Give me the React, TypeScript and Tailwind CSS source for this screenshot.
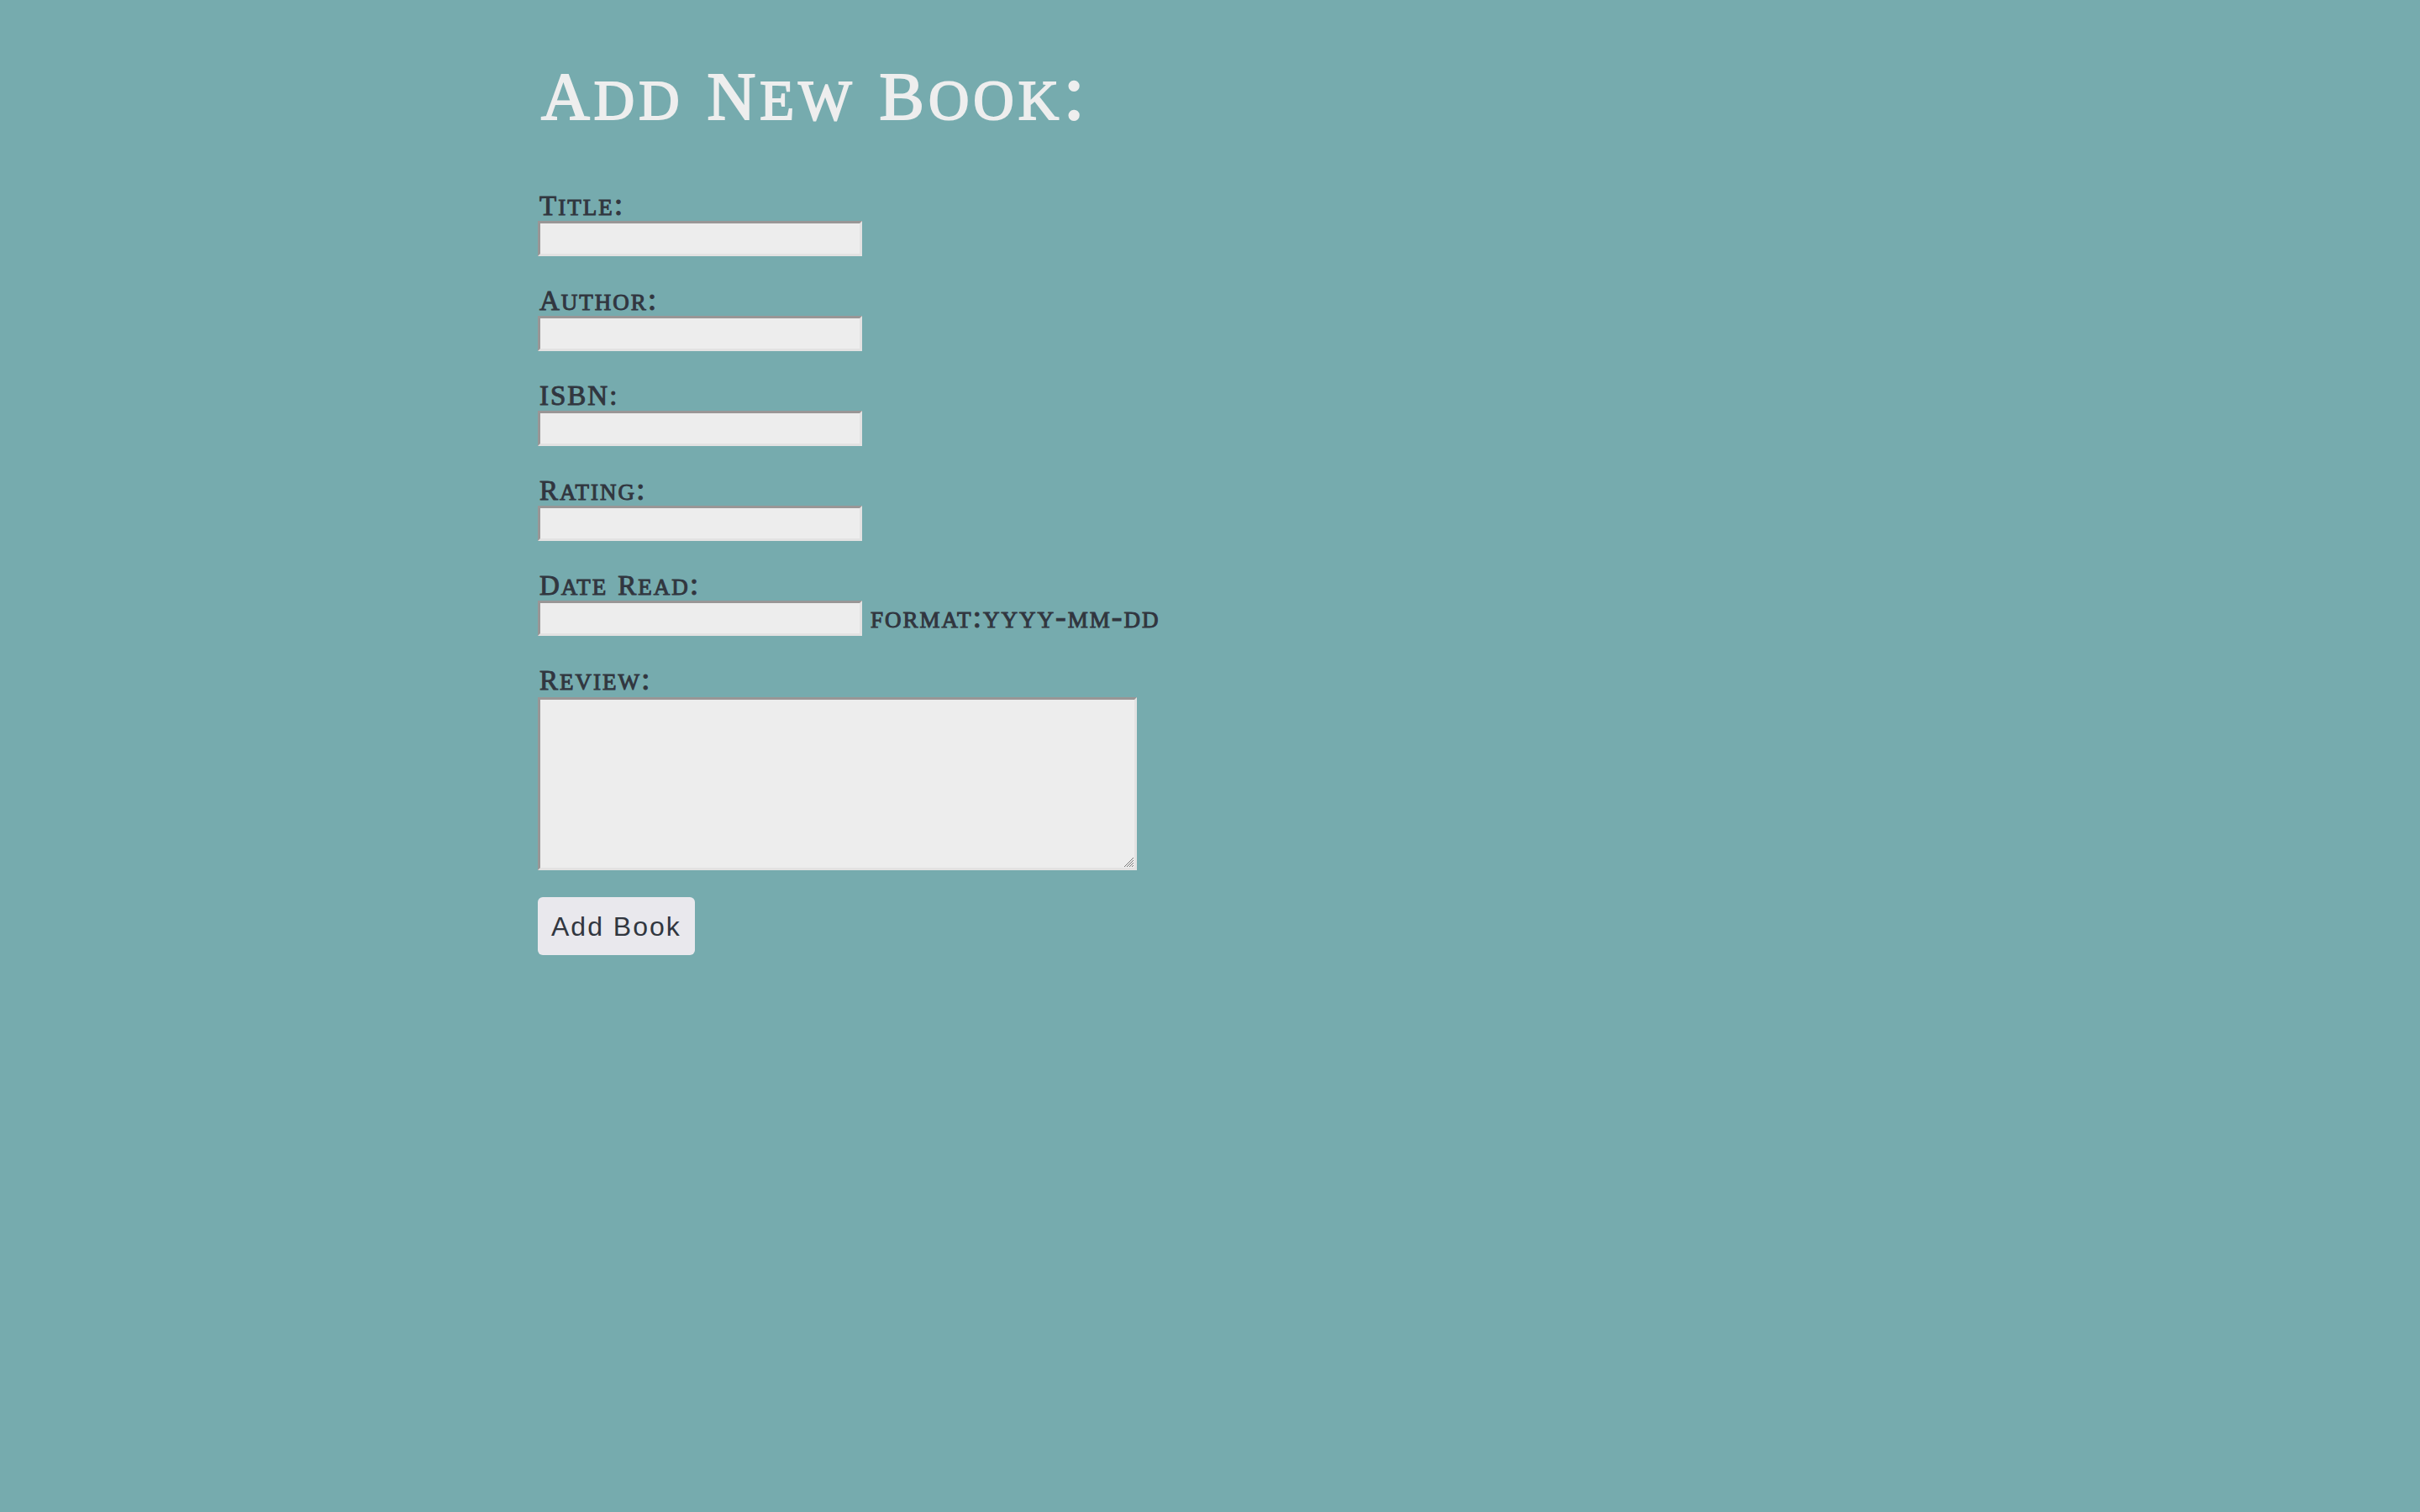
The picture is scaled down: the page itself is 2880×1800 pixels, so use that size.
import React from "react";

const box =
  "block border-3 border-t-[#999696] border-l-[#999696] border-r-[#e3e2e2] border-b-[#e3e2e2] bg-[#ededed] px-1 text-[28px] outline-none";

function Words({ text, cap }: { text: string; cap: string }) {
  return (
    <>
      {text.split(" ").map((word) => (
        <span key={word} className={`inline-block ${cap}`}>
          {word}
        </span>
      ))}
    </>
  );
}

function FieldLabel({ id, text }: { id: string; text: string }) {
  const plain = text === "ISBN:";
  return (
    <label
      htmlFor={id}
      className={`flex h-9 items-baseline gap-3 pl-0.5 tracking-[2px] [-webkit-text-stroke:1px] ${
        plain ? "text-[33px] leading-9" : "text-[38px] leading-8 [font-variant-caps:small-caps]"
      }`}
    >
      {plain ? text : <Words text={text} cap="first-letter:text-[33px]" />}
    </label>
  );
}

const fields = [
  { id: "title", label: "Title:" },
  { id: "author", label: "Author:" },
  { id: "isbn", label: "ISBN:" },
  { id: "rating", label: "Rating:" },
  { id: "date", label: "Date Read:", hint: "format:yyyy-mm-dd" },
];

export default function App() {
  return (
    <div className="min-h-screen bg-[#76abae] font-['Liberation_Serif',serif] text-[#31363f]">
      <main className="mx-auto max-w-[1600px] pt-[58px]">
        <h1 className="flex items-baseline gap-7 pl-1 text-[95px] leading-[104px] tracking-[5px] text-[#eeeeee] [-webkit-text-stroke:2px] [font-variant-caps:small-caps]">
          <Words text="Add New Book:" cap="first-letter:text-[80px]" />
        </h1>
        <form className="mt-15 flex flex-col items-start" onSubmit={(e) => e.preventDefault()}>
          {fields.map((f) => (
            <div key={f.id} className="mb-[35px]">
              <FieldLabel id={f.id} text={f.label} />
              <div className="flex h-[42px] items-center gap-2">
                <input id={f.id} type="text" className={`${box} h-[42px] w-[386px]`} />
                {f.hint && (
                  <span className="pb-1 pl-0.5 text-[38px] leading-9 tracking-[2px] [-webkit-text-stroke:1px] [font-variant-caps:small-caps]">
                    {f.hint}
                  </span>
                )}
              </div>
            </div>
          ))}
          <FieldLabel id="review" text="Review:" />
          <div className="relative mt-0.5">
            <textarea id="review" className={`${box} h-[206px] w-[713px] resize-none`} />
            <svg className="absolute right-1 bottom-1 size-[11px]" viewBox="0 0 11 11" stroke="#777777" shapeRendering="crispEdges">
              <path d="M0 11L11 0M3 11L11 3M6 11L11 6M9 11L11 9" />
            </svg>
          </div>
          <button
            type="submit"
            className="mt-8 h-[69px] rounded-md bg-[#e9e8ed] px-4 font-['Liberation_Sans',sans-serif] text-[32px] tracking-[2px]"
          >
            Add Book
          </button>
        </form>
      </main>
    </div>
  );
}
